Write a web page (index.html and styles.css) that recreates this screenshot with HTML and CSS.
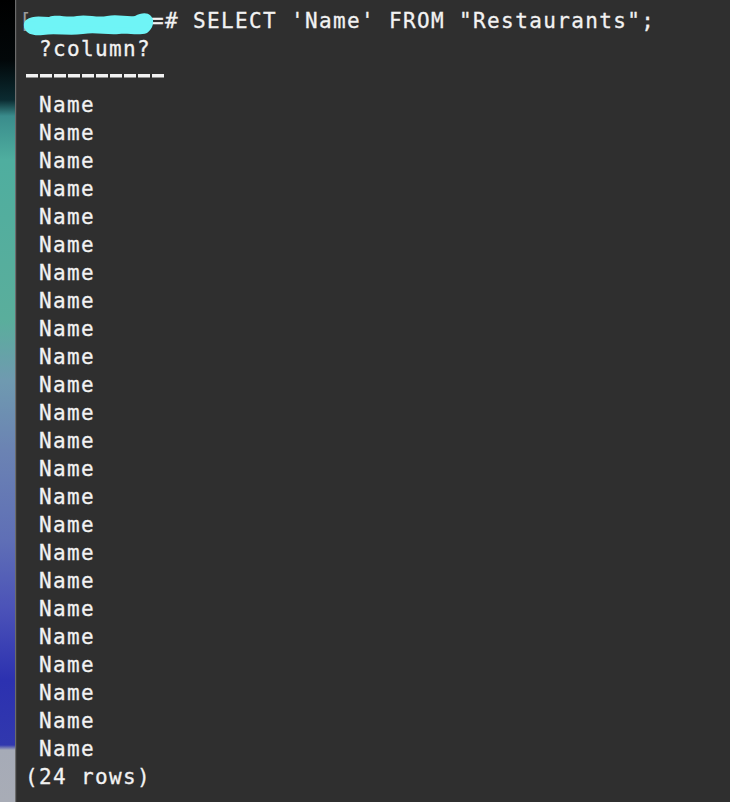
FILE: index.html
```html
<!DOCTYPE html>
<html>
<head>
<meta charset="utf-8">
<link rel="stylesheet" href="styles.css">
</head>
<body>
<div class="screen">
  <div class="wallpaper"></div>
  <div class="edge"></div>
  <div class="terminal">
    <div class="line prompt"><span class="bracket">[</span><span class="user">        </span>=# SELECT 'Name' FROM "Restaurants";<svg class="scribble" width="132" height="26" viewBox="0 0 132 26"><path d="M3 9 C10 4 18 6 26 6 C34 3 44 7 54 5 C64 3 74 7 84 5 C94 3 104 6 112 5 C118 2 124 1 128 5 C132 10 130 18 124 22 C116 25 106 22 96 23 C84 24 72 21 60 23 C46 25 32 22 20 24 C10 25 4 23 2 18 C0 14 1 11 3 9 Z" fill="#6ff4f6"/><path d="M5 15 C28 12 58 11 88 12 C106 13 120 12 126 10" stroke="#6ff4f6" stroke-width="8" fill="none" stroke-linecap="round"/></svg></div>
    <div class="line"> ?column?</div>
    <div class="line"><span class="dashes">----------</span></div>
    <div class="line"> Name</div>
    <div class="line"> Name</div>
    <div class="line"> Name</div>
    <div class="line"> Name</div>
    <div class="line"> Name</div>
    <div class="line"> Name</div>
    <div class="line"> Name</div>
    <div class="line"> Name</div>
    <div class="line"> Name</div>
    <div class="line"> Name</div>
    <div class="line"> Name</div>
    <div class="line"> Name</div>
    <div class="line"> Name</div>
    <div class="line"> Name</div>
    <div class="line"> Name</div>
    <div class="line"> Name</div>
    <div class="line"> Name</div>
    <div class="line"> Name</div>
    <div class="line"> Name</div>
    <div class="line"> Name</div>
    <div class="line"> Name</div>
    <div class="line"> Name</div>
    <div class="line"> Name</div>
    <div class="line"> Name</div>
    <div class="line">(24 rows)</div>
  </div>
</div>
</body>
</html>
```
FILE: styles.css
```css
html, body {
  margin: 0;
  padding: 0;
  width: 730px;
  height: 802px;
  overflow: hidden;
  background: #2f2f2f;
}
.screen {
  display: flex;
  width: 730px;
  height: 802px;
}
.wallpaper {
  width: 15px;
  flex: none;
  background: linear-gradient(to bottom,
    #000000 0px,
    #020709 60px,
    #0b2b31 100px,
    #3a8c8c 116px,
    #4fae9f 160px,
    #5aae9c 320px,
    #6f9ab0 380px,
    #6b83b3 450px,
    #5f6fb6 540px,
    #4b52b8 610px,
    #2c31b0 680px,
    #3138ae 745px,
    #a6abb7 750px,
    #a8acb6 802px);
}
.edge {
  width: 2px;
  flex: none;
  background: linear-gradient(to right, #6b6b6b 0, #6b6b6b 1px, #3a3a3a 1px);
}
.terminal {
  flex: 1;
  background: #2f2f2f;
  padding: 7px 0 0 8px;
  font-family: "DejaVu Sans Mono", monospace;
  font-size: 21px;
  letter-spacing: 1.36px;
  line-height: 28px;
  color: #f2f2f2;
  -webkit-text-stroke: 0.3px #f2f2f2;
}
.line {
  white-space: pre;
  height: 28px;
}
.dashes {
  display: inline-block;
  height: 28px;
  margin-top: -3px;
  vertical-align: top;
  background-image: repeating-linear-gradient(to right, #f2f2f2 0, #f2f2f2 12px, transparent 12px, transparent 14px);
  background-repeat: no-repeat;
  background-size: 140px 3.5px;
  background-position: 1px 14px;
}
.prompt {
  position: relative;
}
.bracket {
  color: #9a9a9a;
  -webkit-text-stroke: 0;
  margin-left: -6px;
  margin-right: 6px;
}
.scribble {
  position: absolute;
  left: -2px;
  top: 4px;
}
```
